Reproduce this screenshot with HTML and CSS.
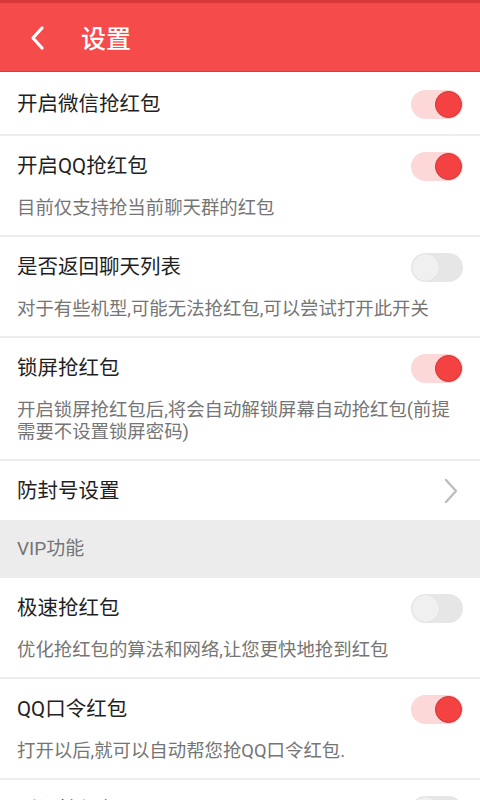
FILE: index.html
```
<!DOCTYPE html>
<html>

<head>
  <title>设置</title>
  <link rel="stylesheet" href="styles.css">
</head>

<body>
  <div class="topbar">
    <svg class="back" width="16" height="26" viewBox="0 0 16 26">
      <polyline points="12,3 3,13 12,23" fill="none" stroke="#fff" stroke-width="3.2" stroke-linecap="round" stroke-linejoin="round" />
    </svg>
    <h1>设置</h1>
  </div>

  <div class="list">
    <div class="item first">
      <div class="head">
        <div class="title">开启微信抢红包</div>
        <div class="switch on"><span></span></div>
      </div>
    </div>

    <div class="item">
      <div class="head">
        <div class="title">开启QQ抢红包</div>
        <div class="switch on"><span></span></div>
      </div>
      <div class="desc">目前仅支持抢当前聊天群的红包</div>
    </div>

    <div class="item">
      <div class="head">
        <div class="title">是否返回聊天列表</div>
        <div class="switch"><span></span></div>
      </div>
      <div class="desc">对于有些机型,可能无法抢红包,可以尝试打开此开关</div>
    </div>

    <div class="item">
      <div class="head">
        <div class="title">锁屏抢红包</div>
        <div class="switch on"><span></span></div>
      </div>
      <div class="desc">开启锁屏抢红包后,将会自动解锁屏幕自动抢红包(前提需要不设置锁屏密码)</div>
    </div>

    <div class="item single">
      <div class="head">
        <div class="title">防封号设置</div>
        <svg class="arrow" width="14" height="26" viewBox="0 0 14 26">
          <polyline points="2,2 12,13 2,24" fill="none" stroke="#bdbdbd" stroke-width="2.4" stroke-linecap="round" stroke-linejoin="round" />
        </svg>
      </div>
    </div>

    <div class="section">VIP功能</div>

    <div class="item">
      <div class="head">
        <div class="title">极速抢红包</div>
        <div class="switch"><span></span></div>
      </div>
      <div class="desc">优化抢红包的算法和网络,让您更快地抢到红包</div>
    </div>

    <div class="item">
      <div class="head">
        <div class="title">QQ口令红包</div>
        <div class="switch on"><span></span></div>
      </div>
      <div class="desc">打开以后,就可以自动帮您抢QQ口令红包.</div>
    </div>

    <div class="item">
      <div class="head">
        <div class="title">延迟抢红包</div>
        <div class="switch"><span></span></div>
      </div>
    </div>
  </div>
</body>

</html>
```

FILE: styles.css
```
body {
  margin: 0;
  font-family: Roboto, "Noto Sans CJK SC", sans-serif;
  background-color: #fff;
  overflow: hidden;
}

.topbar {
  height: 68px;
  background-color: #f64b4b;
  border-top: 3px solid #d93838;
  border-bottom: 1px solid #de3c3c;
  display: flex;
  align-items: center;
}

.topbar .back {
  margin-left: 30px;
  margin-right: 35px;
  margin-top: 2px;
}

.topbar h1 {
  margin: 0;
  color: #fff;
  font-size: 25px;
  font-weight: 500;
}

.item {
  padding: 15px 17px 16px 17px;
  border-bottom: 2px solid #ededed;
}

.item.first {
  padding-top: 17px;
  padding-bottom: 15px;
}

.item.single {
  padding-top: 15px;
  padding-bottom: 14px;
  border-bottom: none;
}

.head {
  display: flex;
  align-items: center;
  justify-content: space-between;
  height: 30px;
}

.title {
  font-size: 20.5px;
  line-height: 30px;
  color: #1f1f1f;
}

.desc {
  margin-top: 16px;
  font-size: 18.4px;
  line-height: 22px;
  color: #757575;
}

.arrow {
  margin-right: 5px;
}

.switch {
  position: relative;
  flex: none;
  width: 52px;
  height: 29px;
  border-radius: 15px;
  background-color: #e6e6e6;
}

.switch span {
  position: absolute;
  top: 1px;
  left: 1px;
  width: 27px;
  height: 27px;
  border-radius: 50%;
  background-color: #f0f0f0;
  box-shadow: 0 0 1px rgba(0, 0, 0, 0.1);
}

.switch.on {
  background-color: #fcd8d8;
}

.switch.on span {
  left: auto;
  right: 1px;
  width: 25px;
  height: 25px;
  background-color: #f44141;
  border: 1px solid #cf3434;
}

.section {
  height: 58px;
  line-height: 58px;
  padding-left: 17px;
  background-color: #ececec;
  color: #757575;
  font-size: 19px;
}
```
